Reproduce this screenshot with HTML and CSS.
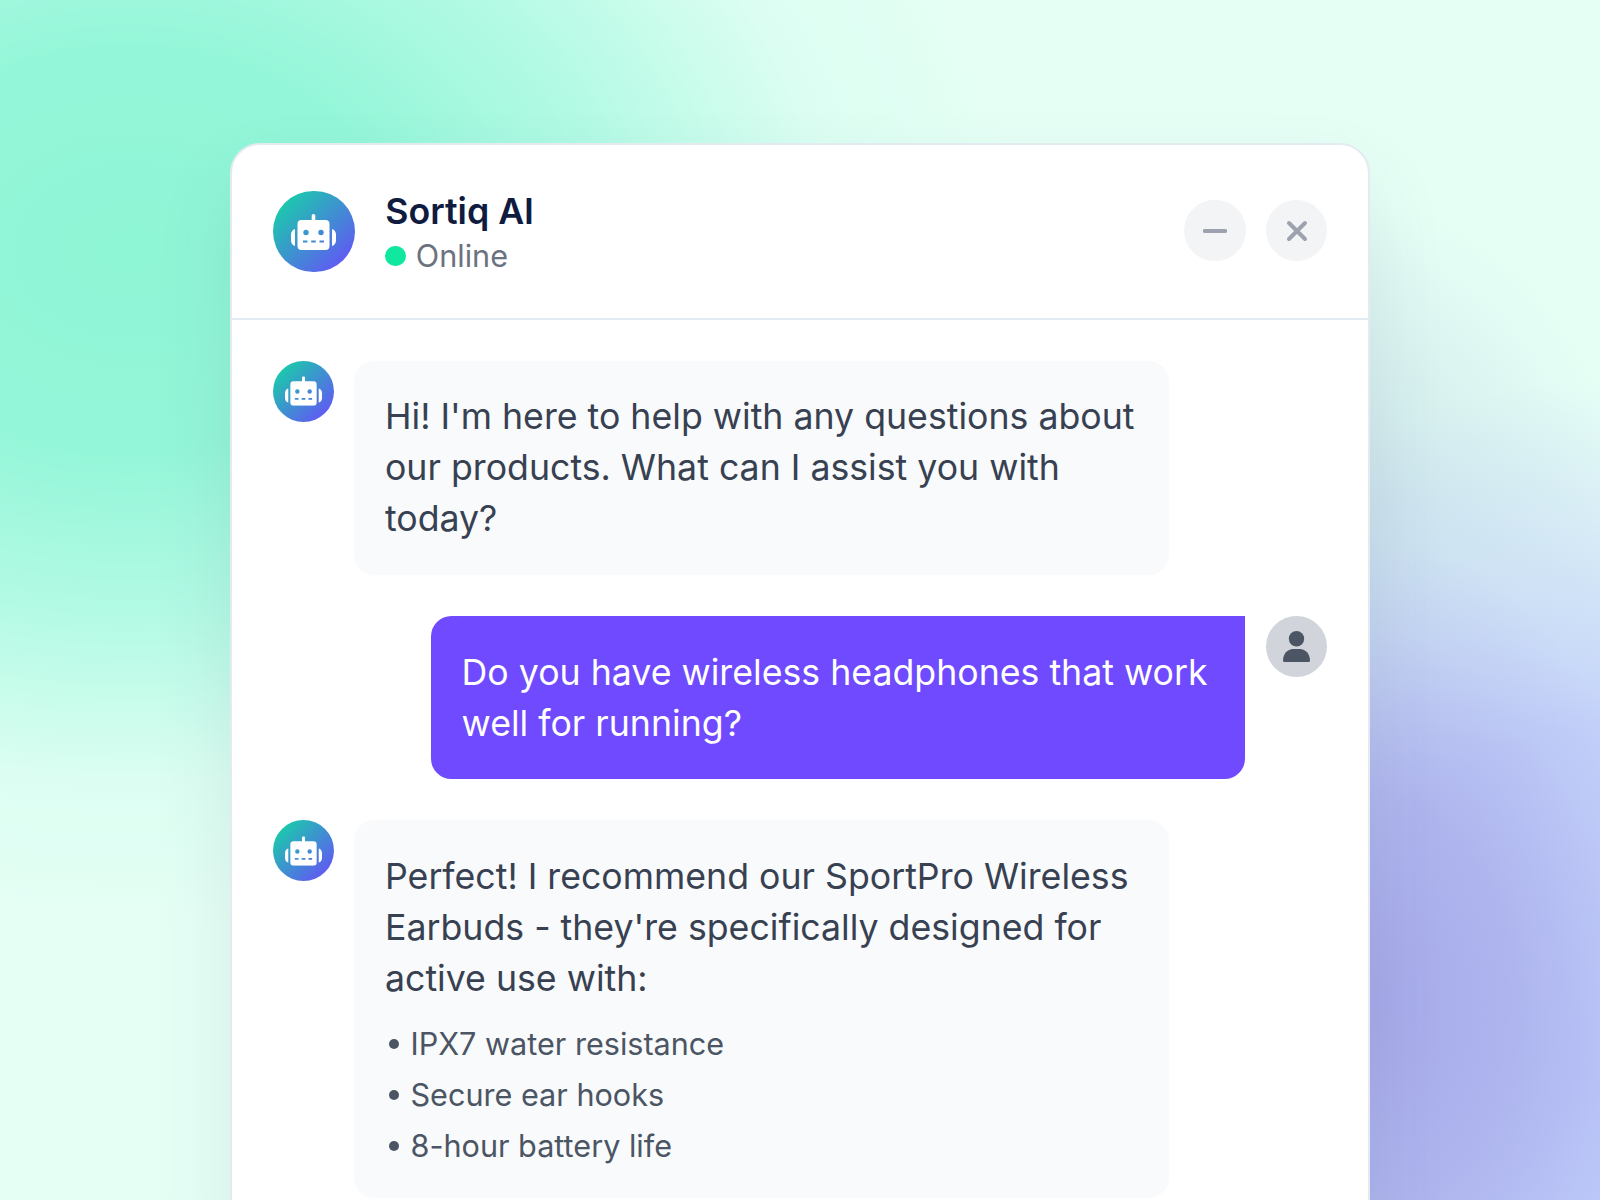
FILE: index.html
```html
<!DOCTYPE html>
<html lang="en">
<head>
  <meta charset="UTF-8" />
  <title>Sortiq AI</title>
  <link rel="stylesheet" href="styles.css">
</head>
<body>
  <div class="chat-card">
    <div class="chat-header">
      <div class="avatar avatar-large bot">
        <svg class="robot-icon" viewBox="0 0 45 36"><use href="#robot" /></svg>
      </div>
      <div class="header-text">
        <div class="bot-name">Sortiq AI</div>
        <div class="bot-status"><span class="status-dot"></span>Online</div>
      </div>
      <div class="header-buttons">
        <button class="round-button">
          <svg viewBox="0 0 24 24"><path d="M1.700 12h20.600" /></svg>
        </button>
        <button class="round-button">
          <svg viewBox="0 0 24 24"><path d="M4 4l16 16M20 4L4 20" /></svg>
        </button>
      </div>
    </div>

    <div class="messages">
      <div class="message">
        <div class="avatar bot">
          <svg class="robot-icon" viewBox="0 0 45 36"><use href="#robot" /></svg>
        </div>
        <div class="bubble">Hi! I'm here to help with any questions about our products. What can I assist you with today?</div>
      </div>

      <div class="message message-user">
        <div class="bubble bubble-user">Do you have wireless headphones that work well for running?</div>
        <div class="avatar user">
          <svg class="user-icon" viewBox="0 0 27 31">
            <circle cx="13.500" cy="7.700" r="7.700" />
            <path d="M0 29.500C0 23 4.500 18 10 18h7c5.500 0 10 5 10 11.500q0 1.500-1.500 1.500h-24q-1.500 0-1.500-1.500z" />
          </svg>
        </div>
      </div>

      <div class="message">
        <div class="avatar bot">
          <svg class="robot-icon" viewBox="0 0 45 36"><use href="#robot" /></svg>
        </div>
        <div class="bubble">
          Perfect! I recommend our SportPro Wireless Earbuds - they're specifically designed for active use with:
          <ul class="feature-list">
            <li>IPX7 water resistance</li>
            <li>Secure ear hooks</li>
            <li>8-hour battery life</li>
          </ul>
        </div>
      </div>
    </div>
  </div>

  <svg class="icon-defs">
    <symbol id="robot" viewBox="0 0 45 36">
      <rect x="20.700" y="0" width="3.600" height="8" rx="1.800" />
      <path fill-rule="evenodd" d="M10.500 6h24a4 4 0 0 1 4 4v22a4 4 0 0 1-4 4h-24a4 4 0 0 1-4-4V10a4 4 0 0 1 4-4zM15 15.800a2.700 2.700 0 1 0 0 5.400 2.700 2.700 0 0 0 0-5.400zm15 0a2.700 2.700 0 1 0 0 5.400 2.700 2.700 0 0 0 0-5.400zM12 26.500v2h4.500v-2zm8.200 0v2h4.600v-2zm8.300 0v2H33v-2z" />
      <path d="M4 15v17C1.500 31.500 0 29 0 26.500v-6C0 18 1.500 15.500 4 15zM41 15v17c2.500-.5 4-3 4-5.500v-6c0-2.500-1.500-5-4-5.500z" />
    </symbol>
  </svg>
</body>
</html>
```

FILE: styles.css
```css
body {
  margin: 0;
  height: 1200px;
  overflow: hidden;
  font-family: "Inter", sans-serif;
  background-color: #e6fff5;
  background-image:
    radial-gradient(ellipse 300px 460px at 1370px 1000px, #a6aae9 0%, rgba(166, 170, 233, 0.7) 45%, rgba(166, 170, 233, 0.2) 80%, rgba(166, 170, 233, 0) 100%),
    radial-gradient(ellipse 560px 700px at 1600px 1080px, #bcc8fa 0%, rgba(188, 200, 250, 0.85) 50%, rgba(188, 200, 250, 0.3) 80%, rgba(188, 200, 250, 0) 100%),
    radial-gradient(ellipse 280px 320px at 1340px 520px, rgba(180, 205, 225, 0.55) 0%, rgba(180, 205, 225, 0.25) 55%, rgba(180, 205, 225, 0) 100%),
    radial-gradient(ellipse 900px 680px at 130px 250px, #8ef5d5 0%, #94f6d8 30%, rgba(160, 248, 222, 0.7) 55%, rgba(200, 252, 235, 0.35) 78%, rgba(230, 255, 245, 0) 100%);
}

.chat-card {
  box-sizing: border-box;
  width: 1140px;
  margin: 143px 0 0 230px;
  background: #fff;
  border: 2px solid #e3eaf0;
  border-radius: 30px;
  box-shadow: 0 40px 80px rgba(60, 70, 110, 0.1);
}

.chat-header {
  display: flex;
  align-items: center;
  gap: 30.600px;
  padding: 40px 40.800px 40px 41px;
  border-bottom: 2px solid #e2ebf2;
}

.avatar {
  flex: none;
  width: 61.200px;
  height: 61.200px;
  border-radius: 50%;
  display: flex;
  align-items: center;
  justify-content: center;
}

.avatar svg {
  fill: #fff;
}

.robot-icon {
  width: 37px;
  height: 30px;
}

.user-icon {
  width: 27px;
  height: 31px;
}

.avatar.bot {
  background: linear-gradient(135deg, #0fdca0, #6c47ff);
}

.avatar.user {
  background: #d1d5db;
}

.avatar.user svg {
  fill: #4b5563;
}

.avatar-large {
  width: 81.600px;
  height: 81.600px;
}

.avatar-large .robot-icon {
  width: 45px;
  height: 36px;
}

.header-text {
  flex: 1;
  padding-top: 3px;
}

.bot-name {
  font-size: 35.700px;
  line-height: 46px;
  font-weight: 600;
  color: #0f1c3f;
}

.bot-status {
  display: flex;
  align-items: center;
  font-size: 30.600px;
  line-height: 44px;
  color: #6b7280;
}

.status-dot {
  width: 20.400px;
  height: 20.400px;
  margin-right: 10.200px;
  border-radius: 50%;
  background: #10e8a0;
}

.header-buttons {
  display: flex;
  gap: 20.400px;
  margin-top: -2px;
}

.round-button {
  width: 61.200px;
  height: 61.200px;
  padding: 0;
  border: none;
  border-radius: 50%;
  background: #f3f4f6;
  display: flex;
  align-items: center;
  justify-content: center;
}

.round-button svg {
  width: 24px;
  height: 24px;
  fill: none;
  stroke: #9ca3af;
  stroke-width: 4;
  stroke-linecap: round;
}

.messages {
  display: flex;
  flex-direction: column;
  gap: 41px;
  padding: 40.800px;
}

.message {
  display: flex;
  gap: 20.400px;
}

.message-user {
  justify-content: flex-end;
  gap: 21px;
}

.bubble {
  box-sizing: border-box;
  width: 815px;
  padding: 30.600px;
  background: #f9fafb;
  border-radius: 20.400px;
  font-size: 35.700px;
  line-height: 51px;
  color: #374151;
}

.bubble-user {
  width: 814px;
  background: #6f4aff;
  border-radius: 20.400px 0 20.400px 20.400px;
  color: #fff;
}

.feature-list {
  list-style: none;
  margin: 14px 0 -3px;
  padding: 0 0 0 25.500px;
  font-size: 30.600px;
  color: #4b5563;
}

.feature-list li {
  position: relative;
}

.feature-list li::before {
  content: "";
  position: absolute;
  left: -21px;
  top: 21px;
  width: 10px;
  height: 10px;
  border-radius: 50%;
  background: #4b5563;
}

.icon-defs {
  display: none;
}
```
